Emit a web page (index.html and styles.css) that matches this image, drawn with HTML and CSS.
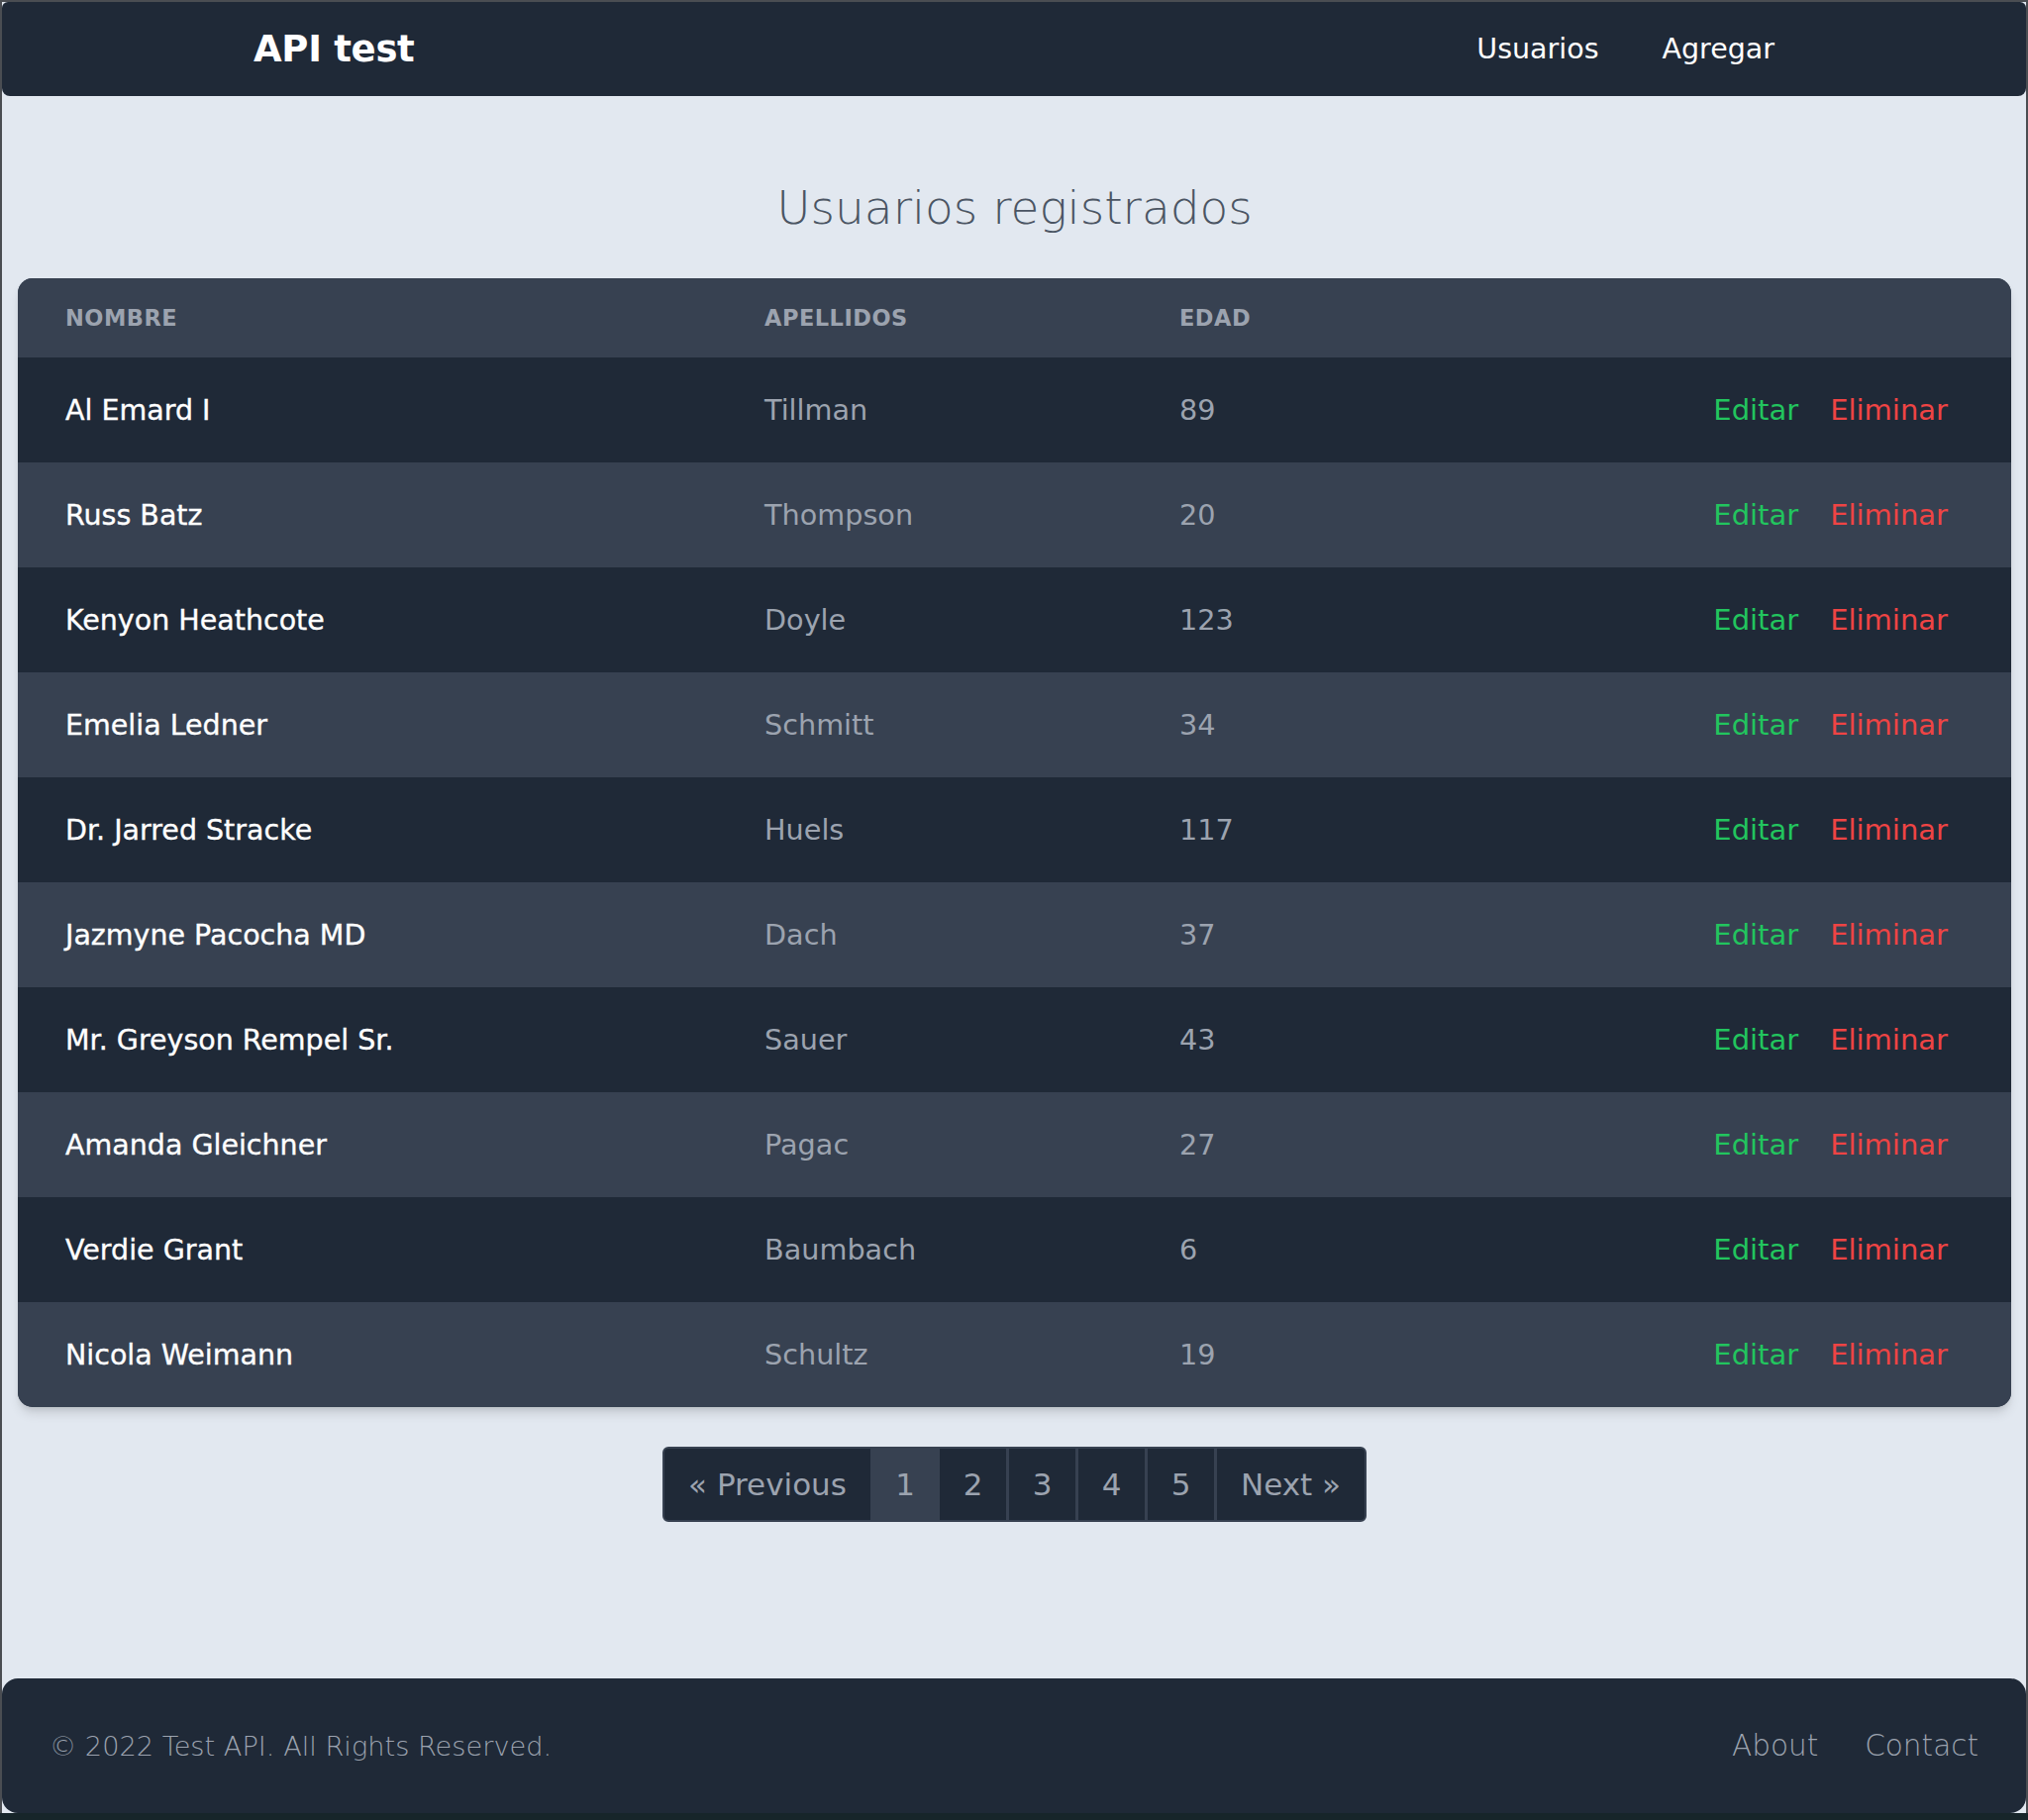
FILE: index.html
```html
<!DOCTYPE html>
<html lang="es">
<head>
<meta charset="utf-8">
<title>API test</title>
<link rel="stylesheet" href="styles.css">
</head>
<body>
<div class="window">
  <header class="navbar">
    <div class="nav-inner">
      <a class="brand">API test</a>
      <nav class="nav-links">
        <a>Usuarios</a>
        <a>Agregar</a>
      </nav>
    </div>
  </header>

  <main class="main">
    <h1 class="title">Usuarios registrados</h1>
    <div class="table-card">
      <table class="users">
        <colgroup>
          <col class="c-name"><col class="c-last"><col class="c-age"><col class="c-act">
        </colgroup>
        <thead>
          <tr><th>Nombre</th><th>Apellidos</th><th>Edad</th><th></th></tr>
        </thead>
        <tbody>
          <tr><td class="name">Al Emard I</td><td>Tillman</td><td>89</td><td class="actions"><a class="edit">Editar</a><a class="del">Eliminar</a></td></tr>
          <tr><td class="name">Russ Batz</td><td>Thompson</td><td>20</td><td class="actions"><a class="edit">Editar</a><a class="del">Eliminar</a></td></tr>
          <tr><td class="name">Kenyon Heathcote</td><td>Doyle</td><td>123</td><td class="actions"><a class="edit">Editar</a><a class="del">Eliminar</a></td></tr>
          <tr><td class="name">Emelia Ledner</td><td>Schmitt</td><td>34</td><td class="actions"><a class="edit">Editar</a><a class="del">Eliminar</a></td></tr>
          <tr><td class="name">Dr. Jarred Stracke</td><td>Huels</td><td>117</td><td class="actions"><a class="edit">Editar</a><a class="del">Eliminar</a></td></tr>
          <tr><td class="name">Jazmyne Pacocha MD</td><td>Dach</td><td>37</td><td class="actions"><a class="edit">Editar</a><a class="del">Eliminar</a></td></tr>
          <tr><td class="name">Mr. Greyson Rempel Sr.</td><td>Sauer</td><td>43</td><td class="actions"><a class="edit">Editar</a><a class="del">Eliminar</a></td></tr>
          <tr><td class="name">Amanda Gleichner</td><td>Pagac</td><td>27</td><td class="actions"><a class="edit">Editar</a><a class="del">Eliminar</a></td></tr>
          <tr><td class="name">Verdie Grant</td><td>Baumbach</td><td>6</td><td class="actions"><a class="edit">Editar</a><a class="del">Eliminar</a></td></tr>
          <tr><td class="name">Nicola Weimann</td><td>Schultz</td><td>19</td><td class="actions"><a class="edit">Editar</a><a class="del">Eliminar</a></td></tr>
        </tbody>
      </table>
    </div>

    <div class="pager-wrap">
      <nav class="pager">
        <a class="pg prev">« Previous</a>
        <a class="pg num current">1</a>
        <a class="pg num">2</a>
        <a class="pg num">3</a>
        <a class="pg num">4</a>
        <a class="pg num">5</a>
        <a class="pg next">Next »</a>
      </nav>
    </div>
  </main>

  <footer class="footer">
    <span class="copy">© 2022 Test API. All Rights Reserved.</span>
    <nav class="foot-links">
      <a>About</a>
      <a>Contact</a>
    </nav>
  </footer>
</div>
<div class="desktop"></div>
</body>
</html>
```

FILE: styles.css
```css
* { box-sizing: border-box; }

html, body {
  margin: 0;
  padding: 0;
}

body {
  background: #4a4d52;
  font-family: "DejaVu Sans", "Open Sans", sans-serif;
  width: 2048px;
  height: 1838px;
  overflow: hidden;
}

a { text-decoration: none; color: inherit; }

.window {
  margin: 2px 2px 0 2px;
  height: 1829px;
  background: #e2e8f0;
  display: flex;
  flex-direction: column;
}

.desktop {
  height: 7px;
  background: #17252a;
}

/* Navbar */
.navbar {
  background: #1f2937;
  height: 95px;
  border-radius: 6px 6px 8px 8px;
  display: flex;
  align-items: center;
}

.nav-inner {
  width: 1536px;
  margin: 0 auto;
  display: flex;
  justify-content: space-between;
  align-items: center;
}

.brand {
  color: #ffffff;
  font-weight: 700;
  font-size: 37px;
  letter-spacing: -0.3px;
}

.nav-links {
  display: flex;
  gap: 64px;
}

.nav-links a {
  color: #ffffff;
  font-size: 28.5px;
}

/* Main */
.main {
  padding: 81px 15px 0 16px;
}

.title {
  margin: 0 0 39px 0;
  text-align: center;
  font-weight: 300;
  font-size: 47px;
  line-height: 64px;
  color: #4b5563;
}

.table-card {
  border-radius: 15px;
  overflow: hidden;
  box-shadow: 0 8px 12px -2px rgba(0,0,0,0.12), 0 4px 6px -2px rgba(0,0,0,0.08);
  background: #374151;
}

.users {
  width: 100%;
  border-collapse: collapse;
  table-layout: fixed;
}

.c-name { width: 706px; }
.c-last { width: 419px; }
.c-age { width: 480px; }

.users th {
  text-align: left;
  height: 80px;
  padding: 0 48px;
  font-size: 22.5px;
  font-weight: 700;
  color: #9ca3af;
  text-transform: uppercase;
  letter-spacing: 0.5px;
  background: #374151;
}

.users td {
  height: 106px;
  padding: 0 48px;
  font-size: 28.7px;
  color: #9ca3af;
  white-space: nowrap;
}

.users tbody tr:nth-child(odd) td { background: #1f2937; }
.users tbody tr:nth-child(even) td { background: #374151; }

.users td.name {
  color: #ffffff;
  font-size: 28.5px;
  -webkit-text-stroke: 0.35px #ffffff;
}

.users td.actions {
  text-align: right;
  padding-right: 64px;
  font-size: 29px;
}

.edit { color: #22c55e; }
.del { color: #ef4444; margin-left: 32px; }

/* Pagination */
.pager-wrap {
  display: flex;
  justify-content: center;
  padding-top: 40px;
}

.pager {
  display: flex;
  background: #374151;
  border: 2px solid #374151;
  border-radius: 6px;
  overflow: hidden;
  gap: 3px;
}

.pg {
  background: #1f2937;
  color: #9ca3af;
  font-size: 31px;
  height: 72px;
  display: flex;
  align-items: center;
  justify-content: center;
}

.pg.prev { width: 208px; }
.pg.num { width: 67px; }
.pg.next { width: 149px; }
.pg.current { background: #374151; width: 64px; }

/* Footer */
.footer {
  margin-top: auto;
  height: 136px;
  background: #1f2937;
  border-radius: 16px;
  display: flex;
  align-items: center;
  justify-content: space-between;
  padding: 0 48px 0 48px;
}

.copy {
  color: #9ca3af;
  font-size: 27.2px;
  font-weight: 300;
}

.foot-links {
  display: flex;
  gap: 47px;
}

.foot-links a {
  color: #9ca3af;
  font-size: 29.5px;
  font-weight: 300;
}
```
